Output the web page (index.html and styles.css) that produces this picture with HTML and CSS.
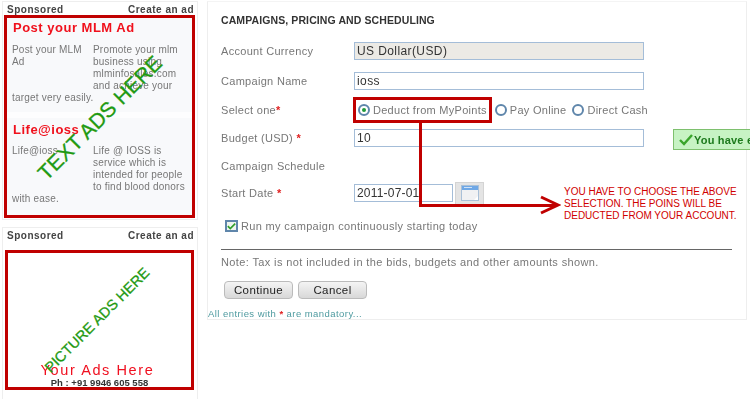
FILE: index.html
```html
<!DOCTYPE html>
<html lang="en">
<head>
<meta charset="utf-8">
<title>Campaigns, pricing and scheduling</title>
<link rel="stylesheet" href="styles.css">
</head>
<body>
<div class="page">
  <aside class="sidebar">
    <section class="card text-card">
      <div class="card-head"><span>Sponsored</span><span>Create an ad</span></div>
      <div class="red-box ads">
        <article class="ad">
          <h3>Post your MLM Ad</h3>
          <div class="ad-body"><span class="ad-name">Post your MLM Ad</span><span class="ad-desc">Promote your mlm business using mlminfosales.com and achieve your</span></div>
          <p>target very easily.</p>
        </article>
        <article class="ad second">
          <h3>Life@ioss</h3>
          <div class="ad-body"><span class="ad-name">Life@ioss</span><span class="ad-desc">Life @ IOSS is service which is intended for people to find blood donors</span></div>
          <p>with ease.</p>
        </article>
        <div class="stamp stamp-text">TEXT ADS HERE</div>
      </div>
    </section>
    <section class="card pic-card">
      <div class="card-head"><span>Sponsored</span><span>Create an ad</span></div>
      <div class="red-box picture">
        <div class="your-ads">Your Ads Here</div>
        <div class="phone">Ph : +91 9946 605 558</div>
        <div class="stamp stamp-pic">PICTURE ADS HERE</div>
      </div>
    </section>
  </aside>

  <main class="panel">
    <h2>CAMPAIGNS, PRICING AND SCHEDULING</h2>
    <div class="form">
      <div class="row"><label>Account Currency</label><div class="field locked">US Dollar(USD)</div></div>
      <div class="row"><label>Campaign Name</label><div class="field">ioss</div></div>
      <div class="row r28"><label>Select one<b>*</b></label>
        <div class="options">
          <span class="radio on"></span><span class="opt first">Deduct from MyPoints</span>
          <span class="radio"></span><span class="opt second-opt">Pay Online</span>
          <span class="radio"></span><span class="opt">Direct Cash</span>
        </div>
      </div>
      <div class="row r28"><label>Budget (USD) <b>*</b></label><div class="field">10</div>
        <div class="notice"><svg width="14" height="12" viewBox="0 0 14 12"><path d="M1 6l4 4 8-9" fill="none" stroke="#3aa52c" stroke-width="2.4"/></svg>You have e</div>
      </div>
      <div class="row r27"><label>Campaign Schedule</label></div>
      <div class="row r28"><label>Start Date <b>*</b></label><div class="field date">2011-07-01</div>
        <span class="cal"><svg width="18" height="16" viewBox="0 0 18 16"><rect x=".5" y=".5" width="17" height="15" fill="#f0f1f3" stroke="#a9c0d8"/><rect x="1" y="1" width="16" height="4" fill="#6fa8e6"/><rect x="3" y="2" width="8" height="1" fill="#cfe2f7"/><path d="M13 15l4-4v4z" fill="#fff"/></svg></span>
      </div>
    </div>
    <div class="continuous"><span class="check"><svg width="11" height="9" viewBox="0 0 11 9"><path d="M1 4l3 3 6-6" fill="none" stroke="#2f9e2a" stroke-width="2"/></svg></span>Run my campaign continuously starting today</div>
    <hr>
    <p class="note">Note: Tax is not included in the bids, budgets and other amounts shown.</p>
    <div class="buttons"><button>Continue</button><button>Cancel</button></div>
    <p class="mandatory">All entries with <b>*</b> are mandatory...</p>

    <div class="mark mark-box"></div>
    <div class="mark mark-down"></div>
    <div class="mark mark-across"></div>
    <svg class="arrowhead" width="22" height="20" viewBox="0 0 22 20"><path d="M2 2l17 8-17 8" fill="none" stroke="#c00000" stroke-width="3"/></svg>
    <p class="callout">YOU HAVE TO CHOOSE THE ABOVE SELECTION. THE POINS WILL BE DEDUCTED FROM YOUR ACCOUNT.</p>
  </main>
</div>
</body>
</html>
```
FILE: styles.css
```css
* { box-sizing: border-box; }
html, body { margin: 0; padding: 0; background: #fff; }
body { width: 750px; height: 400px; overflow: hidden; font-family: "Liberation Sans", Arial, sans-serif; }
.page { display: flex; align-items: flex-start; padding: 1px 0 0 2px; gap: 9px; }
.sidebar { width: 196px; display: flex; flex-direction: column; gap: 7px; }
.card { border: 1px solid #eee; padding: 0 1px; }
.text-card { height: 219px; }
.pic-card { height: 172px; border-bottom: 0; }
.card-head { display: flex; justify-content: space-between; padding: 2px 2px 0 3px; height: 13px; font-size: 10px; font-weight: bold; color: #444; letter-spacing: .5px; filter: blur(.3px); }
.red-box { position: relative; border: 3px solid #c00000; }
.ads { height: 203px; background: #f8f9fb; margin-right: 1px; }
.ad { height: 94px; padding: 2px 5px 0 5px; color: #777; font-size: 10px; line-height: 12px; letter-spacing: .2px; filter: blur(.3px); }
.ad.second { height: 103px; padding-top: 4px; border-top: 6px solid #fdfdfe; }
.ad h3 { margin: 0 0 8px 1px; font-size: 13px; line-height: 16px; color: #f0101c; letter-spacing: .5px; }
.ad.second h3 { margin-bottom: 7px; }
.ad p { margin: 0; white-space: nowrap; }
.ad-body { display: flex; }
.ad-name { width: 81px; padding-right: 8px; flex: none; }
.ad-desc { flex: 1; }
.picture { margin: 9px 2px 0 1px; height: 140px; background: #fff; text-align: center; }
.your-ads { margin-top: 110px; padding-right: 4px; font-size: 14.5px; line-height: 15px; color: #f01020; letter-spacing: 1.6px; filter: blur(.3px); }
.phone { font-size: 9.5px; line-height: 10px; font-weight: bold; color: #333; filter: blur(.3px); }
.stamp { position: absolute; white-space: nowrap; color: #1f9a12; transform: rotate(-45deg); transform-origin: center; -webkit-text-stroke: .3px #1f9a12; text-align: center; }
.stamp-text { left: 3px; top: 88px; width: 180px; font-size: 21px; line-height: 24px; }
.stamp-pic { left: 11px; top: 58px; width: 156px; font-size: 14.5px; line-height: 18px; }

.panel { position: relative; width: 540px; height: 319px; border: 1px solid #eee; border-top-color: #f4f4f4; padding: 12px 0 0 13px; color: #777; font-size: 11px; }
h2 { margin: 0; font-size: 10.5px; line-height: 12px; font-weight: bold; color: #333; letter-spacing: .1px; filter: blur(.3px); }
.form { margin-top: 10px; display: flex; flex-direction: column; filter: blur(.3px); }
.row { display: flex; align-items: center; height: 30px; position: relative; }
.row.r28 { height: 28px; }
.row.r27 { height: 27px; }
label { width: 133px; flex: none; letter-spacing: .3px; }
label b, .mandatory b { color: #e02020; }
.field { width: 290px; height: 18px; border: 1px solid #a4bdd8; background: #fff; padding-left: 2px; color: #333; font-size: 12px; line-height: 16px; letter-spacing: .4px; }
.locked { background: #eceae5; }
.date { width: 99px; letter-spacing: .2px; }
.cal { display: flex; align-items: center; justify-content: center; width: 29px; height: 23px; margin-left: 2px; background: #e4e4e4; border: 1px solid #d4d4d4; }
.options { display: flex; align-items: center; margin-left: 4px; }
.radio { display: flex; align-items: center; justify-content: center; width: 12px; height: 12px; border-radius: 50%; border: 2px solid #5f86ab; background: #fff; flex: none; }
.radio.on::after { content: ""; width: 4px; height: 4px; border-radius: 50%; background: #1f9a3a; }
.opt { margin: 0 1px 0 3px; letter-spacing: .28px; white-space: nowrap; }
.opt.first { margin-right: 8px; }
.opt.second-opt { margin-right: 6px; }
.notice { position: absolute; left: 452px; top: 5px; width: 84px; height: 21px; display: flex; align-items: center; gap: 1px; padding-left: 5px; background: #c7f3c4; border: 1px solid #7ec06e; border-right: 0; color: #1d7a1d; font-size: 11px; font-weight: bold; white-space: nowrap; overflow: hidden; letter-spacing: .2px; }
.continuous { display: flex; align-items: center; gap: 3px; margin: 13px 0 0 4px; letter-spacing: .34px; white-space: nowrap; filter: blur(.3px); }
.check { display: flex; align-items: center; justify-content: center; width: 13px; height: 12px; border: 2px solid #5f86ab; background: #eef5ee; flex: none; }
hr { width: 511px; height: 1px; margin: 17px 0 0 0; border: 0; background: #666; }
.note { margin: 6px 0 0; line-height: 13px; letter-spacing: .38px; white-space: nowrap; filter: blur(.3px); }
.buttons { display: flex; gap: 5px; margin: 12px 0 0 3px; filter: blur(.3px); }
button { width: 69px; height: 18px; padding: 0; border: 1px solid #bbb; border-radius: 4px; background: linear-gradient(#f4f4f4, #d8d8d8); color: #222; font: 11.5px/16px "Liberation Sans", Arial, sans-serif; letter-spacing: .4px; }
.mandatory { margin: 8px 0 0 -13px; line-height: 13px; font-size: 9.5px; color: #4f9ba0; letter-spacing: .44px; white-space: nowrap; filter: blur(.3px); }
.mark { position: absolute; }
.mark-box { left: 145px; top: 95px; width: 139px; height: 26px; border: 3px solid #c00000; }
.mark-down { left: 211px; top: 120px; width: 3px; height: 84px; background: #c00000; }
.mark-across { left: 211px; top: 202px; width: 136px; height: 3px; background: #c00000; }
.arrowhead { position: absolute; left: 331px; top: 193px; }
.callout { position: absolute; left: 356px; top: 184px; width: 178px; margin: 0; font-size: 10px; line-height: 12px; color: #d00000; }
```
